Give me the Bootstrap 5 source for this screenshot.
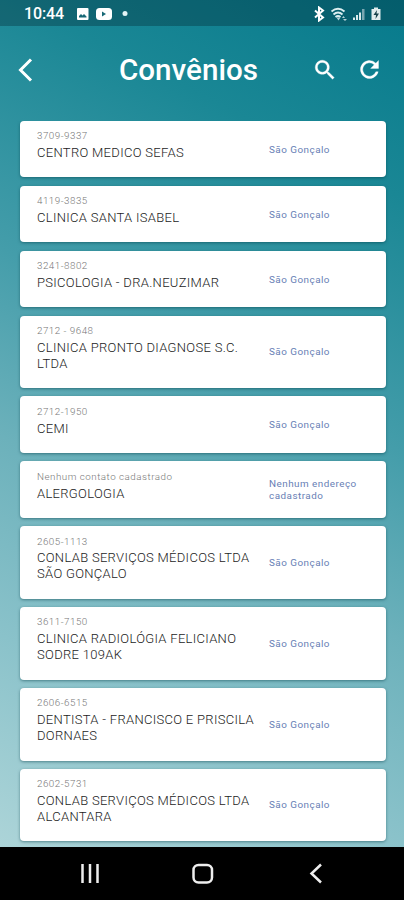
<!DOCTYPE html>
<html lang="pt-BR">
<head>
<meta charset="utf-8">
<meta name="viewport" content="width=device-width, initial-scale=1">
<title>Convênios</title>
<link href="https://cdn.jsdelivr.net/npm/bootstrap@5.3.0/dist/css/bootstrap.min.css" rel="stylesheet">
<style>
body{font-family:Roboto,"Liberation Sans",sans-serif;height:900px;overflow:hidden}
.screen{height:900px;background:linear-gradient(207deg,#067a8c 0%,#1a8795 18%,#449daa 41%,#6cb1bb 58%,#8ac2ca 76%,#acd4d8 95%)}
.status{height:26px;padding:1px 21px 0 24px;background:rgba(0,30,40,.31)}
.clock{font-size:16px;font-weight:500;line-height:26px;width:53px;letter-spacing:-.1px}
.appbar{height:94.6px;padding:0 21px 7px 17px}
.title{font-size:29.6px;font-weight:500;line-height:36px;margin-left:84px;width:193px}
.list{gap:8.1px;padding:0 18.5px 0 19.5px}
.entry{height:56.9px;flex:none;padding:8.3px 13px 0 17.5px;border:0;border-radius:4px;box-shadow:0 1px 3px rgba(0,60,70,.5)}
.entry.tall{height:72.7px}
.who{width:232px;flex:none}
.phone{font-size:9.8px;line-height:13px;font-weight:300;letter-spacing:.5px;color:#777}
.name{font-size:13px;line-height:15.8px;font-weight:300;letter-spacing:.31px;color:#1c1c1c;margin-top:2.9px;white-space:nowrap}
.city{font-size:9.9px;line-height:12px;letter-spacing:.48px;color:#6880b5;width:100px;flex:none;margin-bottom:7.3px}
.sysnav{height:53px}
svg{display:block;flex:none}
</style>
<script src="https://cdn.jsdelivr.net/npm/bootstrap@5.3.0/dist/js/bootstrap.bundle.min.js"></script>
</head>
<body>
<div class="screen d-flex flex-column">
  <div class="status d-flex align-items-center text-white flex-shrink-0">
    <span class="clock">10:44</span>
    <svg width="52" height="14" viewBox="0 0 52 14"><rect x="0" y="1" width="11.500" height="12" rx="1" fill="#fff"/><path d="M2 10.500V9l2-2 1.500 1.500L7 7l2.500 2.500v1z" fill="#176876"/><rect x="19" y="1" width="16" height="12" rx="3.500" fill="#fff"/><path d="M25 4.500v5l4-2.500z" fill="#176876"/><circle cx="48" cy="6.500" r="2.500" fill="#e3f4f6"/></svg>
    <svg class="ms-auto" width="70" height="16" viewBox="0 0 70 16"><path d="M2 4.500l8 7-4 3V1.500l4 3-8 7" fill="none" stroke="#fff" stroke-width="2"/><path d="M18.500 5.500q6.500-5.500 13 0M20.500 8.500q4.500-4 9 0M22.500 11q2.500-2 5 0" fill="none" stroke="#dceef0" stroke-width="1.900"/><path d="M23.500 11.500h4l-2 3zM29 12l1.500-2 1.500 2zM30 13h4l-2 2z" fill="#b5d2d8"/><path d="M40 11.500h2V14h-2zM43 9h2v5h-2zM46 6.500h2V14h-2z" fill="#d9eaec"/><path d="M49 3h2.500v11H49z" fill="#78a7b1"/><path d="M58.500 3H61V1.500h4V3h2.500v11h-9z" fill="#e0eced"/><path d="M64 4l-3.500 5H63l-.5 4 3.500-5.500h-2.500z" fill="#17414a"/></svg>
  </div>
  <header class="appbar d-flex align-items-center flex-shrink-0 text-white">
    <svg width="18" height="24" viewBox="0 0 18 24"><path d="M14 1.500L3.500 12 14 22.500" fill="none" stroke="#fff" stroke-width="3"/></svg>
    <h1 class="title mb-0">Convênios</h1>
    <svg width="26" height="26" viewBox="0 0 24 24" fill="#fff" stroke="#fff" stroke-width=".3"><path d="M15.500 14h-.79l-.28-.27A6.500 6.500 0 1 0 13.730 14.430l.27.28v.79l5 4.990L20.490 19zM9.500 14a4.500 4.500 0 1 1 0-9 4.500 4.500 0 0 1 0 9z"/></svg>
    <svg class="ms-auto" width="27" height="27" viewBox="0 0 24 24" fill="#fff" stroke="#fff" stroke-width=".3"><path d="M17.650 6.350A8 8 0 1 0 19.730 14h-2.080A6 6 0 1 1 16.220 7.780L13 11h7V4z"/></svg>
  </header>
  <main class="list d-flex flex-column flex-grow-1 overflow-hidden">
    <article class="card entry flex-row"><div class="who"><div class="phone">3709-9337</div><div class="name">CENTRO MEDICO SEFAS</div></div><div class="city align-self-center">São Gonçalo</div></article>
    <article class="card entry flex-row"><div class="who"><div class="phone">4119-3835</div><div class="name">CLINICA SANTA ISABEL</div></div><div class="city align-self-center">São Gonçalo</div></article>
    <article class="card entry flex-row"><div class="who"><div class="phone">3241-8802</div><div class="name">PSICOLOGIA - DRA.NEUZIMAR</div></div><div class="city align-self-center">São Gonçalo</div></article>
    <article class="card entry tall flex-row"><div class="who"><div class="phone">2712 - 9648</div><div class="name">CLINICA PRONTO DIAGNOSE S.C.<br>LTDA</div></div><div class="city align-self-center">São Gonçalo</div></article>
    <article class="card entry flex-row"><div class="who"><div class="phone">2712-1950</div><div class="name">CEMI</div></div><div class="city align-self-center">São Gonçalo</div></article>
    <article class="card entry flex-row"><div class="who"><div class="phone">Nenhum contato cadastrado</div><div class="name">ALERGOLOGIA</div></div><div class="city align-self-center">Nenhum endereço cadastrado</div></article>
    <article class="card entry tall flex-row"><div class="who"><div class="phone">2605-1113</div><div class="name">CONLAB SERVIÇOS MÉDICOS LTDA<br>SÃO GONÇALO</div></div><div class="city align-self-center">São Gonçalo</div></article>
    <article class="card entry tall flex-row"><div class="who"><div class="phone">3611-7150</div><div class="name">CLINICA RADIOLÓGIA FELICIANO<br>SODRE 109AK</div></div><div class="city align-self-center">São Gonçalo</div></article>
    <article class="card entry tall flex-row"><div class="who"><div class="phone">2606-6515</div><div class="name">DENTISTA - FRANCISCO E PRISCILA<br>DORNAES</div></div><div class="city align-self-center">São Gonçalo</div></article>
    <article class="card entry tall flex-row"><div class="who"><div class="phone">2602-5731</div><div class="name">CONLAB SERVIÇOS MÉDICOS LTDA<br>ALCANTARA</div></div><div class="city align-self-center">São Gonçalo</div></article>
  </main>
  <nav class="sysnav bg-black flex-shrink-0">
    <svg width="404" height="53" viewBox="0 0 404 53" fill="none" stroke="#eee"><path d="M82.500 17v19M90 17v19M97.500 17v19" stroke-width="2.500"/><rect x="193.500" y="18" width="18.500" height="17.500" rx="5" stroke-width="2.500"/><path d="M321 17.500L311.500 26.500 321 35.500" stroke-width="2.500"/></svg>
  </nav>
</div>
</body>
</html>
